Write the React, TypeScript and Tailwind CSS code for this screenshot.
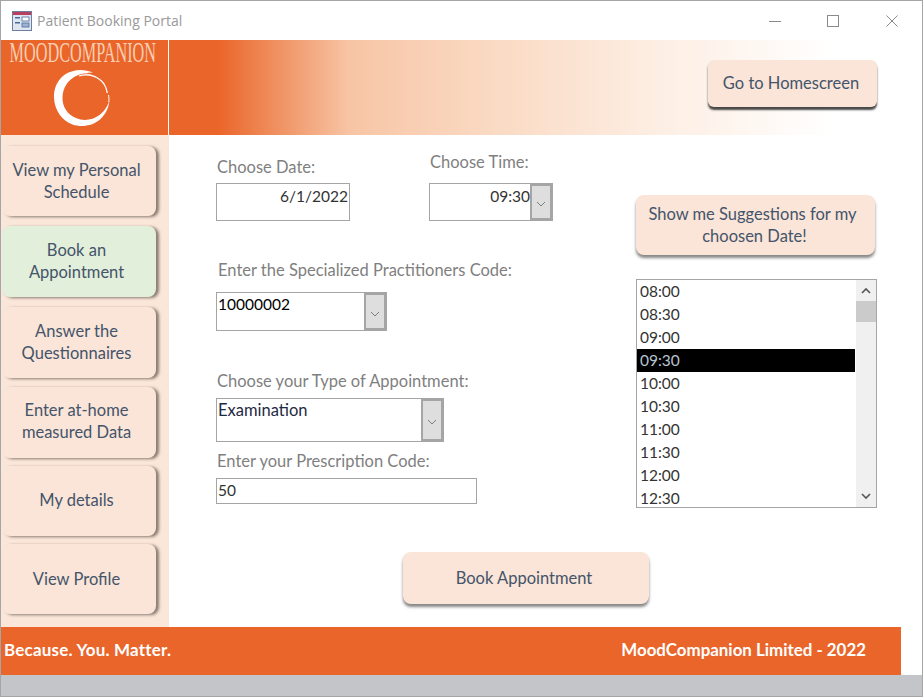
const navItems = [
  { label: "View my Personal Schedule", cls: "h-[70px] mt-0 pb-0 bg-[#fae5d8]" },
  { label: "Book an Appointment", cls: "h-[71px] mt-[10px] pb-[2px] bg-[#e2efda]" },
  { label: "Answer the Questionnaires", cls: "h-[71px] mt-[10px] pb-[2px] bg-[#fae5d8]" },
  { label: "Enter at-home measured Data", cls: "h-[71px] mt-[9px] pb-[4px] bg-[#fae5d8]" },
  { label: "My details", cls: "h-[70px] mt-[8px] pb-[2px] bg-[#fae5d8]" },
  { label: "View Profile", cls: "h-[70px] mt-[8px] pb-[1px] bg-[#fae5d8]" },
];

const times = ["08:00", "08:30", "09:00", "09:30", "10:00", "10:30", "11:00", "11:30", "12:00", "12:30"];

function Chevron() {
  return (
    <svg width="10" height="6" viewBox="0 0 10 6" fill="none" stroke="#666" strokeWidth="0.800">
      <path d="M1 1l4 4 4-4" />
    </svg>
  );
}

function ComboButton() {
  return (
    <div className="w-[22px] self-stretch shrink-0 bg-[#dedede] border-2 border-[#a5a5a5] flex items-center justify-center pt-[4px]">
      <Chevron />
    </div>
  );
}

function FormIcon() {
  return (
    <svg width="20" height="20" viewBox="0 0 20 20">
      <rect x="0.5" y="0.5" width="19" height="19" fill="#dfe6f2" stroke="#6d7f9c" />
      <rect x="1" y="1" width="18" height="3" fill="#b8405e" />
      <rect x="3" y="6" width="5" height="1.5" fill="#4a6a9a" />
      <rect x="3" y="11" width="5" height="1.5" fill="#4a6a9a" />
      <rect x="10" y="6" width="7" height="4" fill="#fff" stroke="#4a6a9a" strokeWidth="0.8" />
      <rect x="10" y="12" width="7" height="4" fill="#9db4d4" stroke="#4a6a9a" strokeWidth="0.8" />
    </svg>
  );
}

function BrushRing() {
  return (
    <svg width="60" height="60" viewBox="0 0 60 60" fill="none">
      <path
        d="M40 4.500C31 .5 20 1 12 6.500 4.500 11.500 .5 20.500 1 30c.6 12 8 23 18.500 26.500 9 3 20 1.500 27.500-5 5-4.500 8.500-11 9.500-18.500-2.500 5.500-5 10.500-10 14-6.500 5-16 6.500-23.500 3C14 46.500 9 38 9.500 29 10 20 14.500 12.500 22 8.500 28 5.500 34 4.500 40 4.500z"
        fill="#fff"
      />
      <path d="M26 8c10-3 20 1 25 8 2 3 3 6 3.300 9" stroke="#fff" strokeWidth="1.300" />
      <path d="M32 6c8 .5 15 4 19 10" stroke="#fff" strokeWidth="0.800" />
      <path d="M55.500 27c.6 2.500.5 5 .2 7" stroke="#fff" strokeWidth="1" />
    </svg>
  );
}

export default function App() {
  return (
    <div className="w-[923px] h-[697px] border border-[#a5a5a5] bg-white flex flex-col overflow-hidden font-['Lato',sans-serif] text-[16.5px] leading-[22px]">
      {/* title bar */}
      <div className="h-[39px] shrink-0 flex items-center pl-[11px] pr-[23px]">
        <FormIcon />
        <span className="ml-[5px] font-['Open_Sans',sans-serif] text-[14px] text-[#999]">Patient Booking Portal</span>
        <svg className="ml-auto" width="130" height="14" viewBox="0 0 130 14" fill="none" stroke="#8a8a8a">
          <path d="M0 7.500h12" />
          <rect x="58.500" y="1.500" width="11" height="11" />
          <path d="M117.500 1.500l11 11M128.500 1.500l-11 11" />
        </svg>
      </div>

      {/* banner */}
      <div className="h-[95px] shrink-0 flex">
        <div className="w-[167px] bg-[#ea6529] flex flex-col items-center">
          <div className="h-[26px] -mt-px ml-[-4px] flex items-center justify-center whitespace-nowrap font-['Liberation_Serif',serif] text-[29px] leading-[26px] text-[#f9cdb3] scale-x-[.56]">
            MOODCOMPANION
          </div>
          <div className="mt-[3px] ml-[-4px]">
            <BrushRing />
          </div>
        </div>
        <div className="w-px bg-white" />
        <div className="flex-1 flex justify-end items-start pt-[20px] pr-[45px] bg-[linear-gradient(90deg,#ea6529_6.4%,#f7c5a5_24%,#fadac3_43%,#fdeee3_65%,#ffffff_88%)]">
          <button className="w-[169px] h-[47px] pb-[2px] pr-[3px] bg-[#fae5d8] rounded-[6px] text-[#44546a] shadow-[0_3px_2px_rgba(40,40,40,.85)]">
            Go to Homescreen
          </button>
        </div>
      </div>

      {/* body */}
      <div className="h-[492px] shrink-0 flex">
        <div className="w-[168px] shrink-0 bg-[#fbe6da] pt-[11px] pl-[1px]">
          {navItems.map((item) => (
            <button
              key={item.label}
              className={`${item.cls} w-[154px] block rounded-[8px] pr-[5px] text-[#44546a] shadow-[3px_1px_3px_rgba(90,80,70,.7)]`}
            >
              <span className="block w-[140px] mx-auto">{item.label}</span>
            </button>
          ))}
        </div>

        <div className="flex-1 pt-[16px] flex flex-col">
          <div className="flex">
            <div className="w-[467px] pl-[47px] shrink-0">
              <div className="flex items-end">
                <div className="w-[134px]">
                  <div className="pl-[1px] text-[#7f7f7f]">Choose Date:</div>
                  <div className="mt-[5px] h-[38px] border border-[#a5a5a5] pr-[1px] pt-px text-right text-[15.5px] text-[#333]">6/1/2022</div>
                </div>
                <div className="ml-[79px] w-[124px]">
                  <div className="pl-[1px] text-[#7f7f7f]">Choose Time:</div>
                  <div className="mt-[10px] h-[38px] border border-[#a5a5a5] flex">
                    <div className="flex-1 text-right pt-px text-[15.5px] text-[#333]">09:30</div>
                    <ComboButton />
                  </div>
                </div>
              </div>

              <div className="mt-[38px] pl-[2px] text-[#7f7f7f]">Enter the Specialized Practitioners Code:</div>
              <div className="mt-[11px] w-[171px] h-[39px] border border-[#a5a5a5] flex">
                <div className="flex-1 pl-px text-[15.5px] text-black">10000002</div>
                <ComboButton />
              </div>

              <div className="mt-[39px] pl-[1px] text-[#7f7f7f]">Choose your Type of Appointment:</div>
              <div className="mt-[6px] w-[228px] h-[44px] border border-[#a5a5a5] flex">
                <div className="flex-1 pl-px text-[#1f2a44]">Examination</div>
                <ComboButton />
              </div>

              <div className="mt-[8px] pl-[1px] text-[#7f7f7f]">Enter your Prescription Code:</div>
              <div className="mt-[6px] w-[261px] h-[26px] border border-[#a5a5a5] pl-px text-[15.5px] text-[#333]">50</div>
            </div>

            <div className="mt-[44px] w-[241px]">
              <button className="w-[239px] h-[60px] bg-[#fae5d8] rounded-[8px] text-[#44546a] shadow-[0_3px_3px_rgba(70,70,70,.65)]">
                <span className="block pr-[6px]">Show me Suggestions for my</span>
                <span className="block pr-[2px]">choosen Date!</span>
              </button>
              <div className="mt-[24px] h-[229px] border border-[#a5a5a5] flex overflow-hidden">
                <div className="flex-1 overflow-hidden">
                  {times.map((t) => (
                    <div
                      key={t}
                      className={t === "09:30" ? "h-[23px] pl-[3px] leading-[22px] text-[15.5px] bg-black text-[#b8c4d0]" : "h-[23px] pl-[3px] leading-[22px] text-[15.5px] text-[#333]"}
                    >
                      {t}
                    </div>
                  ))}
                </div>
                <div className="w-[20px] ml-px bg-[#f0f0f0] flex flex-col items-center pt-[7px]">
                  <svg width="10" height="7" viewBox="0 0 10 7" fill="none" stroke="#555" strokeWidth="1.600">
                    <path d="M1 6l4-4 4 4" />
                  </svg>
                  <div className="mt-[7px] h-[21px] w-full bg-[#cbcbcb]" />
                  <svg className="mt-auto mb-[7px]" width="10" height="7" viewBox="0 0 10 7" fill="none" stroke="#555" strokeWidth="1.600">
                    <path d="M1 1l4 4 4-4" />
                  </svg>
                </div>
              </div>
            </div>
          </div>

          <button className="mt-[44px] ml-[234px] w-[246px] h-[52px] pr-[4px] bg-[#fae5d8] rounded-[8px] text-[#44546a] shadow-[0_3px_3px_rgba(70,70,70,.65)]">
            Book Appointment
          </button>
        </div>
      </div>

      {/* footer */}
      <div className="h-[48px] w-[900px] shrink-0 bg-[#ea6529] flex items-center justify-between pl-[3px] pr-[35px] pb-[2px] font-bold text-[17px] text-white">
        <span className="tracking-[.2px]">Because. You. Matter.</span>
        <span className="text-[16.9px]">MoodCompanion Limited - 2022</span>
      </div>
      <div className="flex-1 bg-[#c3c5c9]" />
    </div>
  );
}
